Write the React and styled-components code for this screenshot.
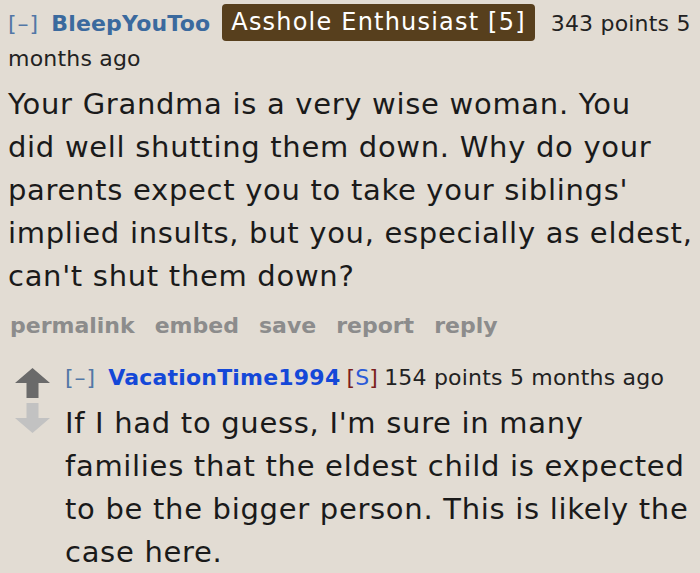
import React from 'react';
import styled, { createGlobalStyle } from 'styled-components';

const GlobalStyle = createGlobalStyle`
  html, body {
    margin: 0;
    background: #e2dcd3;
  }
  body {
    font-family: Verdana, "DejaVu Sans", sans-serif;
    color: #222;
  }
`;

const Page = styled.div`
  padding: 0 8px;
`;

const Comment = styled.div`
  display: flex;
  gap: 15px;
  padding-left: ${(p) => (p.nested ? '7px' : '0')};
  margin-top: 20px;
`;

const Votes = styled.div`
  display: flex;
  flex-direction: column;
  align-items: center;
  gap: 5px;
  padding-top: 8px;
  width: 35px;
  flex-shrink: 0;
`;

const Entry = styled.div`
  flex: 1;
  min-width: 0;
`;

const Tagline = styled.div`
  font-size: 22px;
  line-height: 35px;
  letter-spacing: 0.2px;
  color: #222;
  padding-top: ${(p) => p.top || 0}px;
`;

const Toggle = styled.span`
  color: #5277a6;
  margin-right: 12px;
  letter-spacing: 1px;
`;

const Author = styled.span`
  font-weight: bold;
  color: ${(p) => (p.submitter ? '#1448d8' : '#3b6a9e')};
  margin-right: ${(p) => (p.submitter ? '6px' : '12px')};
`;

const Flair = styled.span`
  display: inline-block;
  background: #573f1d;
  color: #fff;
  font-size: 24px;
  letter-spacing: 1.2px;
  line-height: 33px;
  padding: 2px 9px;
  border-radius: 4px;
  margin-right: 16px;
  vertical-align: 1px;
`;

const Submitter = styled.span`
  color: #7a1e1e;
  margin-right: 6px;

  b {
    font-weight: normal;
    color: #2a5ad8;
  }
`;

const Body = styled.div`
  font-size: 29px;
  letter-spacing: 0.7px;
  line-height: 43px;
  color: #1a1a1a;
  margin-top: ${(p) => p.top || 0}px;
`;

const Line = styled.span`
  display: block;
  white-space: nowrap;
`;

const Buttons = styled.ul`
  list-style: none;
  display: flex;
  gap: 20px;
  margin: 14px 0 0 2px;
  padding: 0;
  font-size: 22px;
  font-weight: bold;
  color: #8c8c8c;
  line-height: 28px;
`;

const first = [
  'Your Grandma is a very wise woman. You',
  'did well shutting them down. Why do your',
  "parents expect you to take your siblings'",
  'implied insults, but you, especially as eldest,',
  "can't shut them down?",
];

const second = [
  "If I had to guess, I'm sure in many",
  'families that the eldest child is expected',
  'to be the bigger person. This is likely the',
  'case here.',
];

function Arrow({ up }) {
  return (
    <svg width="35" height="30" viewBox="0 0 35 30">
      <path
        d={
          up
            ? 'M17.5 0 L35 15 L23.5 15 L23.5 30 L11.5 30 L11.5 15 L0 15 Z'
            : 'M11.5 0 L23.5 0 L23.5 15 L35 15 L17.5 30 L0 15 L11.5 15 Z'
        }
        fill={up ? '#6a6a6a' : '#c2c2c2'}
      />
    </svg>
  );
}

export default function App() {
  return (
    <Page>
      <GlobalStyle />
      <Tagline top={4}>
        <Toggle>[–]</Toggle>
        <Author>BleepYouToo</Author>
        <Flair>Asshole Enthusiast [5]</Flair>
        343 points 5 months ago
      </Tagline>
      <Body top={7}>
        {first.map((l) => (
          <Line key={l}>{l}</Line>
        ))}
      </Body>
      <Buttons>
        <li>permalink</li>
        <li>embed</li>
        <li>save</li>
        <li>report</li>
        <li>reply</li>
      </Buttons>
      <Comment nested>
        <Votes>
          <Arrow up />
          <Arrow />
        </Votes>
        <Entry>
          <Tagline>
            <Toggle>[–]</Toggle>
            <Author submitter>VacationTime1994</Author>
            <Submitter>
              [<b>S</b>]
            </Submitter>
            154 points 5 months ago
          </Tagline>
          <Body top={7}>
            {second.map((l) => (
              <Line key={l}>{l}</Line>
            ))}
          </Body>
        </Entry>
      </Comment>
    </Page>
  );
}
